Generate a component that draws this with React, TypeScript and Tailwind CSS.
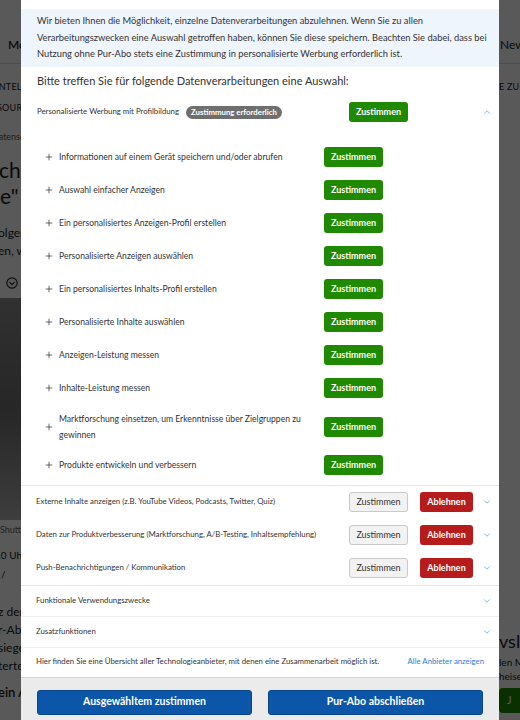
import { ChevronDown, ChevronUp, Plus } from 'lucide-react';

const subPurposes = [
  'Informationen auf einem Gerät speichern und/oder abrufen',
  'Auswahl einfacher Anzeigen',
  'Ein personalisiertes Anzeigen-Profil erstellen',
  'Personalisierte Anzeigen auswählen',
  'Ein personalisiertes Inhalts-Profil erstellen',
  'Personalisierte Inhalte auswählen',
  'Anzeigen-Leistung messen',
  'Inhalte-Leistung messen',
  'Marktforschung einsetzen, um Erkenntnisse über Zielgruppen zu gewinnen',
  'Produkte entwickeln und verbessern',
];

const optionalPurposes = [
  'Externe Inhalte anzeigen (z.B. YouTube Videos, Podcasts, Twitter, Quiz)',
  'Daten zur Produktverbesserung (Marktforschung, A/B-Testing, Inhaltsempfehlung)',
  'Push-Benachrichtigungen / Kommunikation',
];

function BackgroundPage() {
  return (
    <div className="flex h-full bg-white text-[#222]">
      {/* left edge of the article */}
      <div className="w-[21px] overflow-hidden whitespace-nowrap">
        <div className="h-[36px]" />
        <div className="h-[18px] pl-[8px] text-[12px] font-semibold leading-[18px]">Mobilität</div>
        <div className="h-[10px] border-b border-[#ddd]" />
        <div className="h-[16px]" />
        <div className="-ml-[4px] text-[9px] uppercase leading-[14px] tracking-wide">INTELLIGENZ</div>
        <div className="h-[7px]" />
        <div className="-ml-[3px] text-[9px] uppercase leading-[14px] tracking-wide">SOURCEN</div>
        <div className="h-[15px]" />
        <div className="-ml-[8px] text-[9px] leading-[14px] text-[#555]">Datenschutz</div>
        <div className="h-[13px]" />
        <div className="-ml-[1px] text-[21px] leading-[26px]">chung</div>
        <div className="text-[21px] leading-[26px]">e" gut</div>
        <div className="h-[15px]" />
        <div className="-ml-[2px] text-[12px] leading-[18px]">olgende</div>
        <div className="-ml-[2px] text-[12px] leading-[18px]">en, wie</div>
        <div className="h-[13px]" />
        <div className="flex h-[20px] items-center pl-[6px]">
          <svg width="12" height="12" viewBox="0 0 14 14" fill="none" stroke="#222" strokeWidth="1.3">
            <rect x="1" y="1" width="12" height="12" rx="6" />
            <path d="M4 6l3 3 3-3" />
          </svg>
        </div>
        <div className="h-[5px]" />
        <div className="h-[222px] bg-gradient-to-b from-[#8c8c8c] via-[#6f6f6f] to-[#b0b0b0]" />
        <div className="h-[3px]" />
        <div className="text-[9px] leading-[14px] text-[#666]">Shutterstock</div>
        <div className="h-[11px]" />
        <div className="-ml-[5px] text-[10px] leading-[14px]">10 Uhr</div>
        <div className="h-[5px]" />
        <div className="pl-[1px] text-[10px] leading-[14px]">/</div>
        <div className="h-[22px]" />
        <div className="-ml-[2px] text-[12px] leading-[18px]">z der</div>
        <div className="-ml-[2px] text-[12px] leading-[18px]">r-Abo</div>
        <div className="-ml-[2px] text-[12px] leading-[18px]">siege</div>
        <div className="-ml-[2px] text-[12px] leading-[18px]">terte</div>
        <div className="h-[8px]" />
        <div className="-ml-[2px] text-[13px] font-semibold leading-[18px]">ein Abo</div>
      </div>

      <div className="flex-1" />

      {/* right edge of the article */}
      <div className="w-[21px] overflow-hidden whitespace-nowrap">
        <div className="h-[36px]" />
        <div className="h-[18px] pl-[1px] text-[12px] leading-[18px]">Newsletter</div>
        <div className="h-[10px] border-b border-[#ddd]" />
        <div className="h-[16px]" />
        <div className="text-[9px] uppercase leading-[14px] tracking-wide">E ZUKUNFT</div>
        <div className="h-[536px]" />
        <div className="text-[18px] leading-[22px]">vsletter</div>
        <div className="h-[3px]" />
        <div className="text-[10px] leading-[14px]">len M</div>
        <div className="text-[10px] leading-[14px]">heise</div>
        <div className="h-[5px]" />
        <div className="flex h-[25px] items-center rounded-l-sm bg-[#1f8a00] pl-[8px] text-[11px] text-white">J</div>
      </div>
    </div>
  );
}

function GreenButton() {
  return (
    <button className="block h-[20px] w-[59px] rounded-[3px] bg-[#1f8a00] text-[9px] font-bold text-white">
      Zustimmen
    </button>
  );
}

export default function App() {
  return (
    <div className="relative h-[720px] w-[520px] overflow-hidden font-['Lato',sans-serif]">
      <BackgroundPage />
      <div className="absolute inset-0 bg-black/[0.65]" />

      {/* consent dialog */}
      <div className="absolute bottom-0 left-[21px] top-0 flex w-[478px] flex-col bg-white text-[#333]">
        <div className="h-[9px] shrink-0" />
        <div className="whitespace-nowrap bg-[#eef5fc] py-[4px] pl-[16px] pr-[2px] text-[9.3px] leading-[16.5px] text-[#333]">
          Wir bieten Ihnen die Möglichkeit, einzelne Datenverarbeitungen abzulehnen. Wenn Sie zu allen
          <br />
          Verarbeitungszwecken eine Auswahl getroffen haben, können Sie diese speichern. Beachten Sie dabei, dass bei
          <br />
          Nutzung ohne Pur-Abo stets eine Zustimmung in personalisierte Werbung erforderlich ist.
        </div>

        <div className="px-[16px] pt-[5px] text-[11px] leading-[18px] text-[#333]">
          Bitte treffen Sie für folgende Datenverarbeitungen eine Auswahl:
        </div>

        {/* personalised advertising, expanded */}
        <div className="mt-[6px] flex h-[33px] shrink-0 items-center pl-[16px] pr-[7px]">
          <div className="flex flex-1 items-center gap-[7px]">
            <span className="text-[7.8px]">Personalisierte Werbung mit Profilbildung</span>
            <span className="rounded-full bg-[#6f6f6f] px-[5px] text-[7.8px] font-bold leading-[13px] text-white">
              Zustimmung erforderlich
            </span>
          </div>
          <GreenButton />
          <div className="w-[74px]" />
          <ChevronUp size={10} strokeWidth={1.8} className="text-[#4ea3e0]" />
        </div>

        <div className="pb-[3px] pt-[12px]">
          {subPurposes.map((label) => (
            <div key={label} className="flex min-h-[33px] items-center py-[6px] pl-[23px]">
              <Plus size={10} strokeWidth={1.6} className="shrink-0 text-[#222]" />
              <div className="ml-[5px] w-[253px] text-[8.6px] leading-[16px] text-[#333]">{label}</div>
              <div className="ml-[12px] flex">
                <GreenButton />
              </div>
            </div>
          ))}
        </div>

        <div className="border-t border-[#e3e6ea]">
          {optionalPurposes.map((label) => (
            <div key={label} className="flex h-[33px] items-center pl-[15px] pr-[7px]">
              <div className="flex-1 text-[7.8px] text-[#333]">{label}</div>
              <button className="block h-[20px] w-[59px] rounded-[3px] border border-[#c9c9c9] bg-[#f2f2f2] text-[9px] text-[#333]">
                Zustimmen
              </button>
              <button className="ml-[12px] block h-[20px] w-[53px] rounded-[3px] bg-[#b71c1c] text-[9px] font-bold text-white">
                Ablehnen
              </button>
              <ChevronDown size={10} strokeWidth={1.8} className="ml-[9px] text-[#4ea3e0]" />
            </div>
          ))}
        </div>

        <div className="flex h-[31px] shrink-0 items-center border-t border-[#e3e6ea] pl-[15px] pr-[7px]">
          <div className="flex-1 text-[7.8px]">Funktionale Verwendungszwecke</div>
          <ChevronDown size={10} strokeWidth={1.8} className="text-[#4ea3e0]" />
        </div>
        <div className="flex h-[31px] shrink-0 items-center border-t border-[#eef0f2] pl-[15px] pr-[7px]">
          <div className="flex-1 text-[7.8px]">Zusatzfunktionen</div>
          <ChevronDown size={10} strokeWidth={1.8} className="text-[#4ea3e0]" />
        </div>
        <div className="flex h-[30px] shrink-0 items-center border-t border-[#eef0f2] pl-[15px] pr-[15px]">
          <div className="flex-1 text-[7.8px]">
            Hier finden Sie eine Übersicht aller Technologieanbieter, mit denen eine Zusammenarbeit möglich ist.
          </div>
          <span className="text-[7.8px] text-[#2a7fc9]">Alle Anbieter anzeigen</span>
        </div>

        <div className="flex flex-1 items-start gap-[16px] border-t border-[#d6d6d6] bg-[#ebebeb] px-[16px] pt-[12px]">
          <button className="block h-[25px] flex-1 rounded-[3px] border border-[#0a468a] bg-[#0b56a8] text-[10.5px] font-bold text-white">
            Ausgewähltem zustimmen
          </button>
          <button className="block h-[25px] flex-1 rounded-[3px] border border-[#0a468a] bg-[#0b56a8] text-[10.5px] font-bold text-white">
            Pur-Abo abschließen
          </button>
        </div>
      </div>
    </div>
  );
}
